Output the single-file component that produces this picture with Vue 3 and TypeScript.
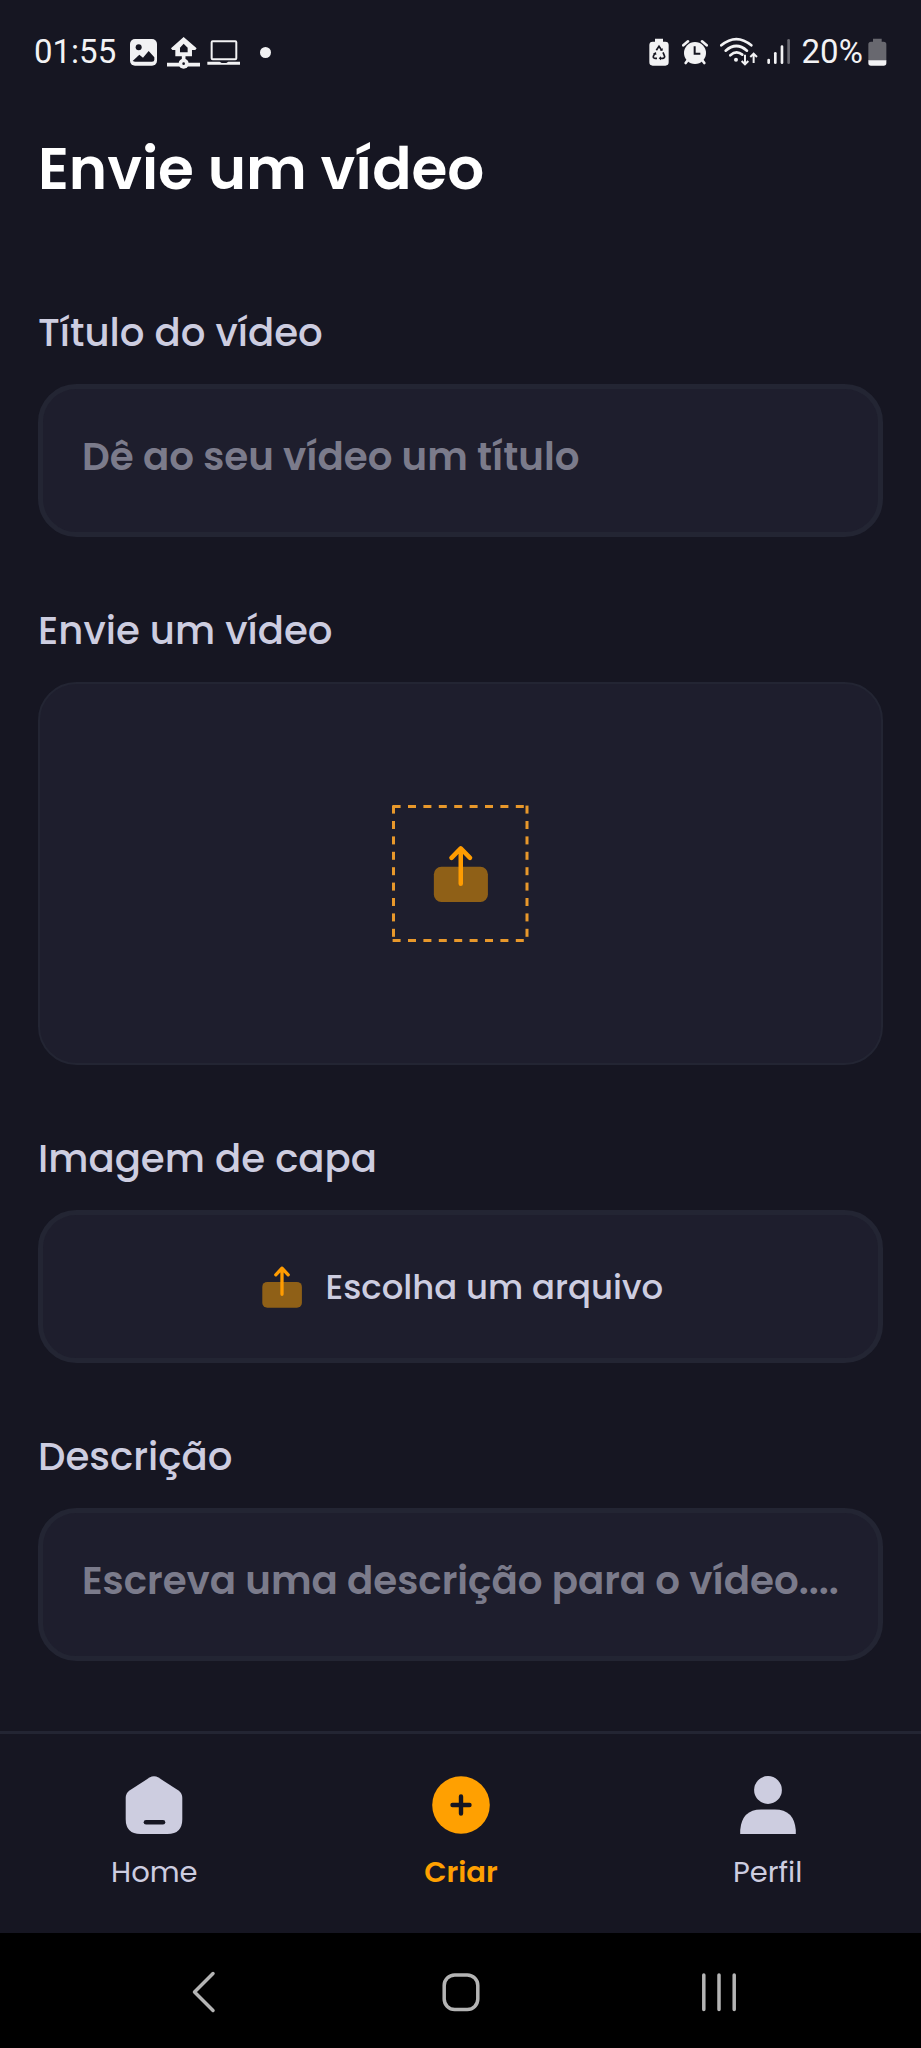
<script setup lang="ts">
import { ref } from 'vue'

type TabId = 'home' | 'create' | 'profile'

interface Tab {
  id: TabId
  label: string
}

const title = ref('')
const description = ref('')
const active = ref<TabId>('create')

const tabs: Tab[] = [
  { id: 'home', label: 'Home' },
  { id: 'create', label: 'Criar' },
  { id: 'profile', label: 'Perfil' },
]

// Start offsets of the dashes along one side of the drop target
const dashes = Array.from({ length: 9 }, (_, i) => i * 15.4)
</script>

<template>
  <div class="screen">
    <header class="status">
      <span class="status-text">01:55</span>
      <svg class="picture" viewBox="330 42 81 108" width="27" height="36">
        <rect x="330" y="57" width="81" height="80" rx="15" fill="#f2f2f4" />
        <circle cx="356" cy="82" r="9" fill="#161622" />
        <path d="M338 123 L358 104 L369 113 L386 93 L403 112 V119 Q403 125 396 125 H345 Z" fill="#161622" />
      </svg>
      <svg class="house" viewBox="441 42 100 108" width="33.3" height="36">
        <path d="M491 51 L530 85 L526 90 H516 V109 H466 V90 H457 L453 85 Z" fill="#f2f2f4" />
        <path d="M491 71 L503 83 V97 H480 V83 Z" fill="#161622" />
        <path d="M491 108 V122 M441 134 H541" stroke="#f2f2f4" stroke-width="11" />
        <circle cx="491" cy="131" r="15" fill="#f2f2f4" />
        <circle cx="491" cy="131" r="4" fill="#161622" />
      </svg>
      <svg class="laptop" viewBox="561 42 100 108" width="33.3" height="36">
        <rect x="575" y="64" width="74" height="54" rx="3" fill="none" stroke="#f2f2f4" stroke-width="6" />
        <path d="M562 125 H599 L605 129 H619 L625 125 H661 V134 H562 Z" fill="#f2f2f4" />
      </svg>
      <span class="dot"></span>

      <span class="spacer"></span>

      <svg class="saver" viewBox="58 42 60 108" width="20" height="36">
        <path d="M76 56 H100 V65 H107 Q117 65 117 75 V127 Q117 137 107 137 H69 Q59 137 59 127 V75 Q59 65 69 65 H76 Z" fill="#f2f2f4" />
        <path d="M80 91 L88 79 L96 91 M100 97 L105 109 Q105 115 99 115 H92 M82 115 H76 Q70 115 71 109 L76 99" fill="none" stroke="#161622" stroke-width="5" />
        <path d="M91 92 H99 V84 Z M94 109 V121 L87 115 Z M70 101 L79 96 L80 105 Z" fill="#161622" />
      </svg>
      <svg class="alarm" viewBox="157 42 78 108" width="26" height="36">
        <circle cx="196" cy="99" r="33" fill="#f2f2f4" />
        <path d="M161 76 L175 64 M231 76 L217 64" stroke="#f2f2f4" stroke-width="8" stroke-linecap="round" />
        <path d="M173 122 L168 129 M219 122 L224 129" stroke="#f2f2f4" stroke-width="8" stroke-linecap="round" />
        <path d="M195 79 V101 H212" fill="none" stroke="#161622" stroke-width="6" />
      </svg>
      <svg class="wifi" viewBox="271 42 115 108" width="38.3" height="36">
        <g fill="none" stroke="#f2f2f4" stroke-width="8" stroke-linecap="round">
          <path d="M275 76 Q320 38 365 76" />
          <path d="M288 92 Q320 64 352 92" />
          <path d="M302 106 Q320 90 338 104" />
        </g>
        <circle cx="319" cy="119" r="6" fill="#f2f2f4" />
        <path d="M346 104 V132 M336 123 L346 133 L356 123 M372 129 V102 M362 111 L372 101 L382 111" fill="none" stroke="#f2f2f4" stroke-width="6" />
      </svg>
      <svg class="signal" viewBox="410 42 70 108" width="23.3" height="36">
        <g stroke="#f2f2f4" stroke-width="8" stroke-linecap="round">
          <path d="M415 120 V128" />
          <path d="M435 100 V128" />
          <path d="M455 80 V128" />
          <path d="M475 61 V128" stroke="#6a6a72" />
        </g>
      </svg>
      <span class="status-text">20%</span>
      <svg class="battery" viewBox="716 42 56 108" width="18.7" height="36">
        <path d="M731 56 H757 V65 H763 Q771 65 771 73 V122 H717 V73 Q717 65 725 65 H731 Z" fill="#68686f" />
        <path d="M717 121 H771 V129 Q771 137 763 137 H725 Q717 137 717 129 Z" fill="#f2f2f4" />
      </svg>
    </header>

    <main class="form">
      <h1>Envie um vídeo</h1>

      <label class="field">
        <span class="label">Título do vídeo</span>
        <span class="box">
          <input v-model="title" type="text" placeholder="Dê ao seu vídeo um título" />
        </span>
      </label>

      <div class="field">
        <span class="label">Envie um vídeo</span>
        <button class="drop" type="button">
          <span class="target">
            <svg class="outline" viewBox="0 0 137 137" width="137" height="137" fill="#e8982b">
              <template v-for="d in dashes" :key="d">
                <rect :x="d + 0.6" y="0" width="8" height="3" />
                <rect :x="d + 0.6" y="134" width="8" height="3" />
                <rect x="0" :y="d + 0.6" width="3" height="8" />
                <rect x="133.5" :y="d + 0.6" width="3" height="8" />
              </template>
            </svg>
            <svg class="upload large" viewBox="0 0 48 48">
              <rect x="4.3" y="18.9" width="39.6" height="25.8" rx="5.5" fill="#8f6017" />
              <path d="M24 31.3 V5.6 M17.2 12.4 L24 5.4 L30.8 12.4" />
            </svg>
          </span>
        </button>
      </div>

      <div class="field">
        <span class="label">Imagem de capa</span>
        <button class="box choose" type="button">
          <svg class="upload" viewBox="0 0 48 48">
            <rect x="4.3" y="18.9" width="39.6" height="25.8" rx="5" fill="#8f6017" />
            <path d="M24 31.3 V5.2 M17.8 11.8 L24 5.2 L30.2 11.8" />
          </svg>
          <span>Escolha um arquivo</span>
        </button>
      </div>

      <label class="field">
        <span class="label">Descrição</span>
        <span class="box">
          <input v-model="description" type="text" placeholder="Escreva uma descrição para o vídeo...." />
        </span>
      </label>
    </main>

    <nav class="tabs">
      <button
        v-for="tab in tabs"
        :key="tab.id"
        type="button"
        class="tab"
        :class="{ active: tab.id === active }"
        @click="active = tab.id"
      >
        <svg v-if="tab.id === 'home'" viewBox="0 0 58 58">
          <path d="M24.5 1.6 Q29 -1 33.5 1.6 L53.5 14.4 Q57.3 17 57.3 22 V43 Q57.3 58 42.5 58 H15.5 Q.7 58 .7 43 V22 Q.7 17 4.5 14.4 Z" fill="currentColor" />
          <path d="M21 46.3 H38" stroke="#161622" stroke-width="4.6" stroke-linecap="round" />
        </svg>
        <svg v-else-if="tab.id === 'create'" viewBox="0 0 58 58">
          <circle cx="29" cy="29" r="28.8" fill="currentColor" />
          <path d="M20.5 29 H37.5 M29 20.5 V37.5" stroke="#161622" stroke-width="4.4" stroke-linecap="round" />
        </svg>
        <svg v-else viewBox="0 0 58 58">
          <circle cx="29" cy="14" r="13.9" fill="currentColor" />
          <path d="M1.2 58 V54 Q3 33.5 22 33.5 H36 Q55 33.5 56.8 54 V58 Z" fill="currentColor" />
        </svg>
        <span>{{ tab.label }}</span>
      </button>
    </nav>

    <footer class="system">
      <svg viewBox="0 0 48 48"><path d="M34 5.5 L15.5 24 L34 42.5" /></svg>
      <svg viewBox="0 0 48 48"><rect x="7.2" y="7" width="33.6" height="34.6" rx="10.5" /></svg>
      <svg viewBox="0 0 48 48"><path d="M8.8 7 V41.5 M24 7 V41.5 M39.2 7 V41.5" /></svg>
    </footer>
  </div>
</template>

<style>
body {
  margin: 0;
  background: #161622;
}
</style>

<style scoped>
.screen {
  display: flex;
  flex-direction: column;
  width: 921px;
  height: 2048px;
  overflow: hidden;
  background: #161622;
  color: #cdcde0;
  font-family: Poppins, Inter, "Open Sans", sans-serif;
}

.screen *,
.screen {
  box-sizing: border-box;
}

svg {
  display: block;
  flex: none;
}

button {
  margin: 0;
  padding: 0;
  border: 0;
  background: none;
  color: inherit;
  font: inherit;
}

.status {
  display: flex;
  flex: none;
  align-items: center;
  height: 104px;
  padding: 0 34px;
}

.status-text {
  color: #f2f2f4;
  font: 400 33px/40px Roboto, sans-serif;
}

.picture { margin-left: 13.8px; }
.house { margin-left: 10px; }
.laptop { margin-left: 6.7px; }

.dot {
  width: 11px;
  height: 11px;
  margin-left: 19.5px;
  border-radius: 50%;
  background: #f2f2f4;
}

.spacer { flex: 1; }
.alarm { margin-left: 13px; }
.wifi { margin-left: 12px; }
.signal { margin: 0 11.5px 0 8.5px; }
.battery { margin-left: 5.5px; }

.form {
  flex: none;
  height: 1627px;
  padding: 30px 38px 0;
}

h1 {
  margin: 0 0 105px;
  color: #fff;
  font-size: 58px;
  font-weight: 600;
  line-height: 70px;
}

.field {
  display: block;
  margin-bottom: 70px;
}

.label {
  display: block;
  margin-bottom: 27px;
  font-size: 38.7px;
  font-weight: 500;
  line-height: 48px;
}

.box {
  display: flex;
  align-items: flex-start;
  width: 100%;
  height: 153px;
  padding: 43.5px 36px 0 39px;
  border: 5px solid #232533;
  border-radius: 38.4px;
  background: #1e1e2d;
}

input {
  width: 100%;
  height: 48px;
  padding: 0;
  border: 0;
  outline: 0;
  background: transparent;
  color: #fff;
  font: 600 38.75px/48px Poppins, Inter, "Open Sans", sans-serif;
}

input::placeholder {
  color: #7b7b8b;
  opacity: 1;
}

.drop {
  display: flex;
  align-items: center;
  justify-content: center;
  width: 100%;
  height: 383px;
  border: 2px solid #232533;
  border-radius: 38.4px;
  background: #1e1e2d;
}

.target {
  display: grid;
  place-items: center;
}

.target > svg {
  grid-area: 1 / 1;
}

.upload {
  width: 48px;
  height: 48px;
  fill: none;
  stroke: #ff9c01;
  stroke-width: 3.3;
  stroke-linecap: round;
  stroke-linejoin: round;
}

.upload rect {
  stroke: none;
}

.upload.large {
  width: 65.5px;
  height: 65.5px;
}

.choose {
  align-items: center;
  justify-content: center;
  gap: 19.6px;
  padding: 0;
  font-size: 33.9px;
  font-weight: 500;
  line-height: 48px;
}

.tabs {
  display: flex;
  flex: none;
  height: 202px;
  padding: 42px 0 0 1px;
  border-top: 3px solid #232533;
}

.tab {
  display: flex;
  flex: 1 1 0;
  flex-direction: column;
  align-items: center;
  gap: 19.6px;
  color: #cdcde0;
  font-size: 29px;
  font-weight: 400;
  line-height: 36px;
}

.tab svg {
  width: 58px;
  height: 58px;
}

.tab.active {
  color: #ffa001;
  font-weight: 600;
}

.system {
  display: grid;
  flex: none;
  grid-template-columns: repeat(3, 258px);
  place-content: center;
  justify-items: center;
  height: 115px;
  padding: 2px 0 0 1px;
  background: #000;
}

.system svg {
  width: 48px;
  height: 48px;
  fill: none;
  stroke: #b4b4b4;
  stroke-width: 3.5;
  stroke-linecap: round;
  stroke-linejoin: round;
}
</style>
